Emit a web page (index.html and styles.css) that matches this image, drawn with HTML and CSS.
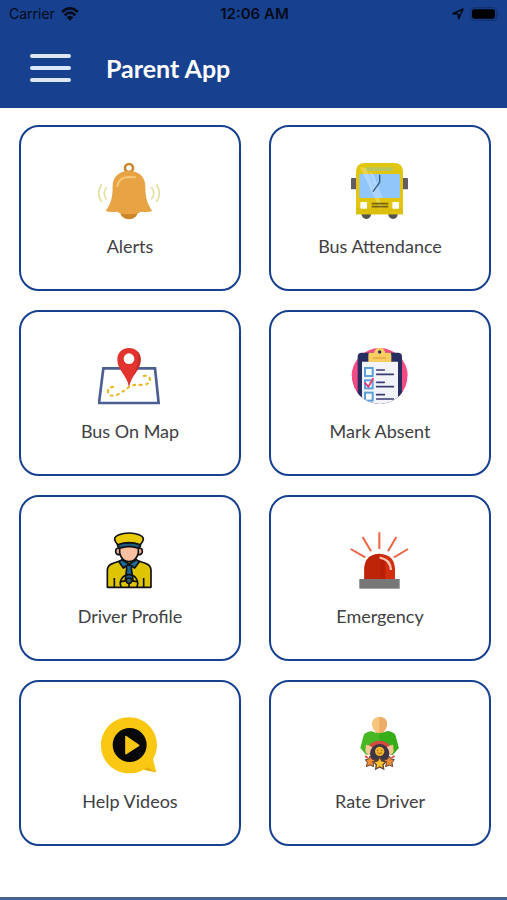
FILE: index.html
```html
<!DOCTYPE html>
<html lang="en">
<head>
<meta charset="utf-8">
<meta name="viewport" content="width=device-width, initial-scale=1">
<title>Parent App</title>
<link rel="stylesheet" href="styles.css">
</head>
<body>
<header class="header">
  <div class="status">
    <div class="status-left">
      <span>Carrier</span>
      <svg width="18" height="14" viewBox="0 0 54 42" aria-hidden="true">
        <g fill="none" stroke="#050b18" stroke-width="8"><path d="M3 15Q27-7 51 15"/><path d="M11 25Q27 9 43 25"/></g>
        <path fill="#050b18" d="M17 31Q27 22 37 31L27 41Z"/>
      </svg>
    </div>
    <span class="status-time">12:06 AM</span>
    <div class="status-right">
      <svg width="12" height="12" viewBox="0 0 36 36" aria-hidden="true"><path d="M3 17L33 3L20 32L18 18Z" fill="none" stroke="#050b18" stroke-width="5" stroke-linejoin="round"/></svg>
      <svg width="30" height="14" viewBox="0 0 90 42" aria-hidden="true">
        <rect x="2" y="2" width="78" height="38" rx="11" fill="none" stroke="#113069" stroke-width="3"/>
        <rect x="6" y="7" width="69" height="28" rx="7" fill="#000"/>
        <path d="M84 15Q89 21 84 27Z" fill="#113069"/>
      </svg>
    </div>
  </div>
  <div class="bar">
    <button class="menu" type="button" aria-label="Menu"><span></span><span></span><span></span></button>
    <h1 class="title">Parent App</h1>
  </div>
</header>
<main class="grid">
  <button class="card" type="button">
    <svg class="icon" viewBox="54 33 192 180" aria-hidden="true">
      <circle cx="147" cy="54" r="12" fill="none" stroke="#c98a2e" stroke-width="8"/>
      <path d="M120 186Q124 207 147 208Q170 207 174 186Z" fill="#cb8426"/>
      <path d="M147 62C176 62 196 81 196 108C196 145 202 162 217 183Q207 187 182 185Q174 193 147 193Q120 193 112 185Q88 187 77 183C92 162 98 145 98 108C98 81 118 62 147 62Z" fill="#e7a344"/>
      <path d="M112 108Q117 83 142 81L165 82" fill="none" stroke="#f5c878" stroke-width="6" stroke-linecap="round"/>
      <g fill="none" stroke="#e3e0a0" stroke-width="5" stroke-linecap="round"><path d="M64 105Q48 130 64 154"/><path d="M79 113Q66 130 79 146"/><path d="M230 105Q246 130 230 154"/><path d="M215 113Q228 130 215 146"/></g>
    </svg>
    <span>Alerts</span>
  </button>
  <button class="card" type="button">
    <svg class="icon" viewBox="54 33 192 180" aria-hidden="true">
      <path d="M94 190H124Q122 207 109 207Q96 207 94 190ZM174 190H204Q202 207 189 207Q176 207 174 190Z" fill="#55524d"/>
      <rect x="63" y="84" width="16" height="34" rx="2" fill="#655c63"/><rect x="218" y="84" width="16" height="34" rx="2" fill="#655c63"/>
      <path d="M78 193V62Q80 40 104 39H194Q217 40 219 62V193Z" fill="#e2c50e"/>
      <path d="M78 174H219V193H78Z" fill="#dcbe0c"/>
      <rect x="107" y="52" width="83" height="11" rx="4" fill="#b8c65c"/>
      <rect x="88" y="72" width="122" height="72" rx="3" fill="#91c6fb"/>
      <path d="M90 52L108 54L160 175L149 176ZM116 62L130 72L158 144L146 144Z" fill="#fff" opacity=".25"/>
      <path d="M149 74V97L129 125" fill="none" stroke="#38576e" stroke-width="4"/>
      <rect x="91" y="156" width="20" height="20" rx="3" fill="#fff"/><rect x="187" y="156" width="20" height="20" rx="3" fill="#fff"/>
      <path d="M125 161H175M125 170H175" stroke="#786410" stroke-width="5"/>
    </svg>
    <span>Bus Attendance</span>
  </button>
  <button class="card" type="button">
    <svg class="icon" viewBox="54 33 192 180" aria-hidden="true">
      <path d="M70 100H225L236 204H57Z" fill="#fff" stroke="#4b5f91" stroke-width="8"/>
      <path d="M102 155Q82 156 84 171Q88 187 110 180Q125 174 148 155Q163 147 188 150Q211 148 210 132Q206 119 188 123" fill="none" stroke="#e9b61d" stroke-width="6" stroke-dasharray="11 8"/>
      <path d="M147 154Q143 136 126 112Q112 93 112 73C112 52 128 39 147 39S182 52 182 73Q182 93 168 112Q151 136 147 154Z" fill="#e2332e"/>
      <path d="M172 49Q182 59 182 73Q182 93 168 112Q151 136 147 154L145 147Q181 101 172 49Z" fill="#c62a25"/>
      <circle cx="147" cy="71" r="16" fill="#fff"/>
    </svg>
    <span>Bus On Map</span>
  </button>
  <button class="card" type="button">
    <svg class="icon" viewBox="54 33 192 180" aria-hidden="true">
      <defs><clipPath id="badge"><path d="M54 33H246V123H233A84 84 0 0 1 65 123H54Z"/></clipPath></defs>
      <g clip-path="url(#badge)">
        <circle cx="149" cy="123" r="84" fill="#f34b83"/>
        <rect x="83" y="53" width="133" height="156" rx="12" fill="#292e62"/>
        <path d="M96 80H204V209H96Z" fill="#f3f4fa"/>
        <path d="M118 53H132Q136 38 149 38T166 53H180Q184 54 184 61V81H115V61Q115 54 118 53Z" fill="#f8ce63"/>
        <circle cx="149" cy="51" r="5" fill="#292e62"/>
        <path d="M129 69H169" stroke="#e6a846" stroke-width="5"/>
        <g fill="#fff" stroke="#5aa0d9" stroke-width="6"><rect x="105" y="99" width="23" height="24"/><rect x="105" y="136" width="23" height="24"/><rect x="105" y="173" width="23" height="24"/></g>
        <path d="M104 143L115 155L130 130" fill="none" stroke="#e83e76" stroke-width="6"/>
        <path d="M140 105H163M140 118H190M140 142H163M140 155H190M140 179H163M140 192H190" stroke="#383b70" stroke-width="5" stroke-linecap="round"/>
      </g>
    </svg>
    <span>Mark Absent</span>
  </button>
  <button class="card" type="button">
    <svg class="icon" viewBox="54 33 192 180" aria-hidden="true">
      <g stroke="#111" stroke-width="5" stroke-linejoin="round">
        <path d="M82 202V149Q84 134 99 130L126 121H169L196 130Q211 134 213 149V202Z" fill="#dfc500"/>
        <path d="M119 84Q107 83 107 94T121 104M175 84Q187 83 187 94T173 104" fill="#f3b093"/>
        <path d="M119 79V99Q125 124 147 125Q169 124 175 99V79Z" fill="#fac0a0"/>
        <path d="M137 134H157L154 145L159 180L147 190L136 180L140 145Z" fill="#16618f"/>
        <path d="M126 119L147 132L130 144L117 125ZM169 119L147 132L164 144L178 125Z" fill="#1d6b97"/>
        <path d="M113 68V79Q121 86 129 82Q147 77 165 82Q174 86 181 79V68Z" fill="#205c80"/>
        <path d="M147 39C169 39 191 47 190 58Q189 65 181 74Q147 62 113 74Q105 65 104 58C103 47 125 39 147 39Z" fill="#e8ca05"/>
        <path d="M103 202V174M191 202V174" fill="none"/>
      </g>
      <g fill="none" stroke="#111" stroke-width="5"><path d="M124 202A26 26 0 1 1 170 202"/><path d="M123 185L141 182M171 185L153 182M147 190V202"/></g>
      <circle cx="147" cy="182" r="8" fill="#315d67" stroke="#111" stroke-width="4"/>
    </svg>
    <span>Driver Profile</span>
  </button>
  <button class="card" type="button">
    <svg class="icon" viewBox="54 33 192 180" aria-hidden="true">
      <path d="M148 37V87M98 51L123 94M199 51L174 94M62 87L106 112M234 87L192 112" stroke="#eb6544" stroke-width="6"/>
      <path d="M103 178V145Q105 103 149 101Q192 103 195 145V178Z" fill="#d22d0d"/>
      <path d="M103 178V145Q105 103 149 101V178Z" fill="#bd2408"/>
      <path d="M149 110H166V178H149Z" fill="#b91f08"/>
      <path d="M149 113Q180 117 183 150" fill="none" stroke="#fac1b1" stroke-width="7"/>
      <rect x="88" y="177" width="121" height="29" fill="#777"/>
    </svg>
    <span>Emergency</span>
  </button>
  <button class="card" type="button">
    <svg class="icon" viewBox="54 33 192 180" aria-hidden="true">
      <path d="M147 37C195 37 231 75 231 121Q231 142 219 162L229 202L191 194Q174 205 147 205C99 205 63 167 63 121S99 37 147 37Z" fill="#fac812"/>
      <path d="M229 202L191 194L202 187Z" fill="#e4ae11"/>
      <circle cx="149" cy="120" r="51" fill="#080808"/>
      <path d="M138 95L176 121L138 146Z" fill="#fac812" stroke="#fac812" stroke-width="5" stroke-linejoin="round"/>
    </svg>
    <span>Help Videos</span>
  </button>
  <button class="card" type="button">
    <svg class="icon" viewBox="54 33 192 180" aria-hidden="true">
      <path d="M137 71H161V92H137Z" fill="#eba968"/>
      <path d="M148 36C135 36 126 44 126 57S134 84 148 84S171 72 171 57S162 36 148 36Z" fill="#f9c57e"/>
      <path d="M148 36C162 36 171 44 171 57S162 84 148 84Z" fill="#edac68"/>
      <path d="M126 79Q148 91 171 79Q190 80 196 91L206 129L188 149H108L91 129L101 91Q107 80 126 79Z" fill="#47b823"/>
      <path d="M148 85Q162 84 171 79Q190 80 196 91L206 129L188 149H148Z" fill="#35ae19"/>
      <path d="M108 119L137 126L126 152Q109 151 106 137ZM189 119L160 126L171 152Q188 151 191 137Z" fill="#f9c894"/>
      <path d="M117 120Q148 95 180 120L169 128H128Z" fill="#d34b43"/>
      <circle cx="149" cy="146" r="29" fill="#3d3543"/>
      <circle cx="149" cy="139" r="14" fill="#f2b42b"/>
      <path d="M141 136H145M153 136H157M143 143Q149 149 155 143" fill="none" stroke="#94601b" stroke-width="3"/>
      <path d="M106 164L116 162L120 153L126 163L136 164L129 173L131 185L120 180L109 185L112 173ZM162 164L172 163L178 153L183 162L193 164L186 173L188 185L178 180L167 185L169 173Z" fill="#ed8b32" stroke="#65423a" stroke-width="3"/>
      <path d="M149 156L155 168L168 170L159 179L161 192L149 186L137 192L139 179L130 170L143 168Z" fill="#fbc42e" stroke="#624335" stroke-width="4"/>
      <path d="M105 153L114 159M194 153L184 159" stroke="#dc4f43" stroke-width="6"/>
    </svg>
    <span>Rate Driver</span>
  </button>
</main>
<footer class="footer"></footer>
</body>
</html>
```
FILE: styles.css
```css
* {
  box-sizing: border-box;
}

body {
  margin: 0;
  min-height: 100vh;
  display: flex;
  flex-direction: column;
  background: #fff;
  font-family: Lato, "Liberation Sans", sans-serif;
}

.header {
  background: #17408f;
  padding-bottom: 16px;
}

.status {
  display: grid;
  grid-template-columns: 1fr auto 1fr;
  align-items: center;
  height: 28px;
  padding: 0 7px 0 9px;
  color: #050b18;
  font: 14px/20px Inter, sans-serif;
}

.status-left,
.status-right {
  display: flex;
  align-items: center;
  gap: 6px;
}

.status-right {
  justify-content: flex-end;
}

.status-time {
  font-size: 15px;
  font-weight: 600;
}

.bar {
  display: flex;
  align-items: center;
  gap: 35px;
  height: 64px;
  padding: 16px 30px 0;
}

.menu {
  display: flex;
  flex-direction: column;
  gap: 8px;
  width: 41px;
  padding: 0;
  border: 0;
  background: none;
}

.menu span {
  height: 4px;
  border-radius: 2px;
  background: #dce6fa;
}

.title {
  margin: 0;
  color: #fff;
  font-size: 25px;
  line-height: 32px;
  font-weight: 700;
}

.grid {
  flex: 1;
  display: grid;
  grid-template-columns: 1fr 1fr;
  align-content: start;
  gap: 19px 28px;
  padding: 17px 16px 20px 19px;
}

.card {
  display: flex;
  flex-direction: column;
  align-items: center;
  gap: 13px;
  padding: 34px 8px 31px;
  border: 2px solid #17408f;
  border-radius: 20px;
  background: #fff;
  color: #404043;
  font: 18px/24px Lato, "Liberation Sans", sans-serif;
}

.icon {
  width: 64px;
  height: 60px;
}

.footer {
  height: 3px;
  background: #46618f;
}
```
